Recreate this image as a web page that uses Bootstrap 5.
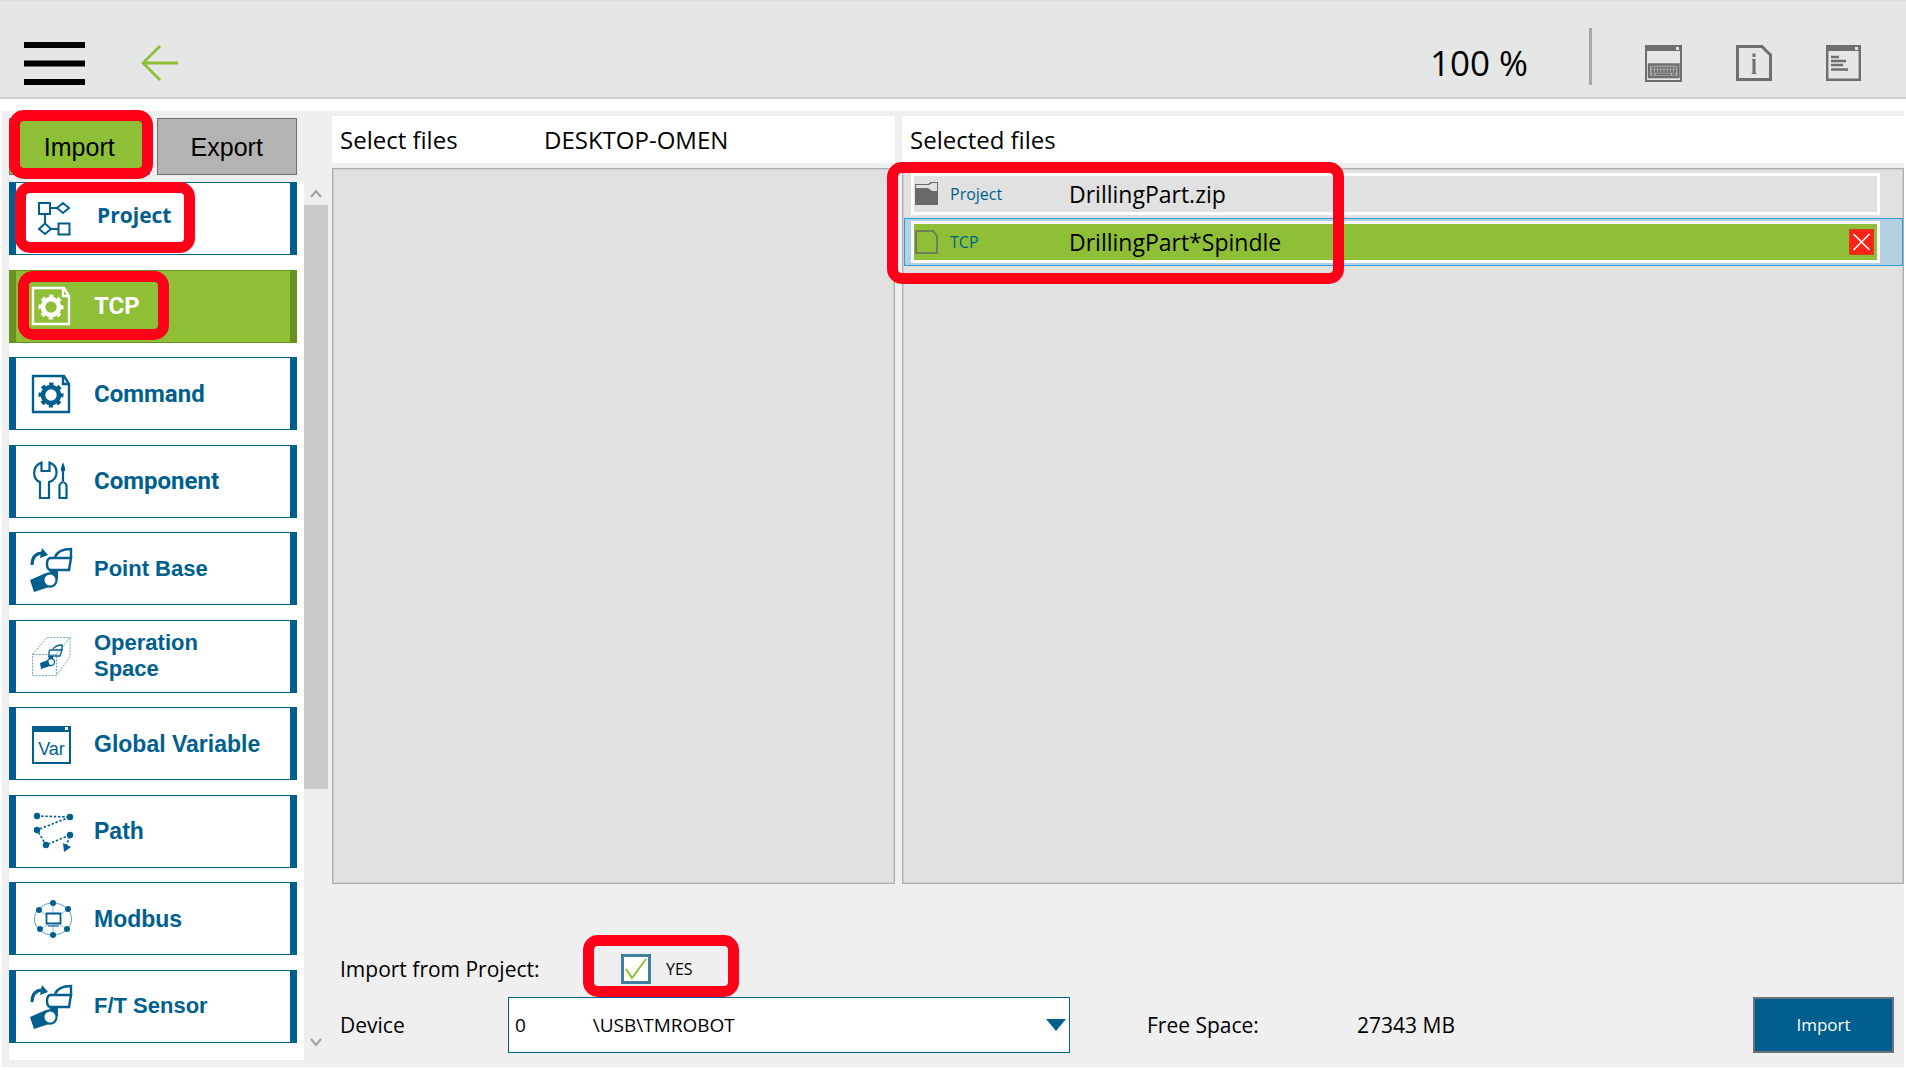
<!DOCTYPE html>
<html lang="en">
<head>
<meta charset="utf-8">
<meta name="viewport" content="width=device-width, initial-scale=1">
<title>Import / Export</title>
<link href="https://cdn.jsdelivr.net/npm/bootstrap@5.3.0/dist/css/bootstrap.min.css" rel="stylesheet">
<style>
:root{--tm-blue:#005f8e;--tm-green:#8ebf36;--tm-panel:#efefef;--tm-pane:#e1e1e1;--tm-red:#ff0018}
body{font-family:"Open Sans","Noto Sans",sans-serif;color:#000;background:#fff;font-size:21px;line-height:30px}
button,select{border-radius:0;padding:0}
svg{display:block;flex:none}
.topbar{height:99px;padding:0 45px 12px 24px;background:#e5e7e6;border-top:1px solid #dcdcdc;border-bottom:2px solid #cfcfcf}
.tool{height:44px;border:0;background:none;display:flex;align-items:center}
.tool-row{gap:54px}
.back{margin-left:56px}
.speed{font-size:35px;line-height:44px}
.rule{width:3px;height:57px;background:#a9a9a9;margin:0 53px 0 61px}
.workspace{margin:12px 2px 3px;background:var(--tm-panel)}
.sidebar{width:330px;flex:none;padding:7px 4px 7px 7px}
.tabs-row{gap:7px;width:288px;margin-bottom:7px}
.tab-btn{height:57px;border:1px solid #707070;background:#b3b3b3;font:25px/30px "Liberation Sans",sans-serif;color:#000}
.tab-btn.active{background:var(--tm-green)}
.kinds{background:#fff;width:295px;padding:0 7px 17px 0}
.kind{position:relative;width:288px;height:73px;border:solid var(--tm-blue);border-width:1px 7px;background:#fff;color:var(--tm-blue);font:bold 22px/26px "Liberation Sans",sans-serif;text-align:left;padding-left:13px;gap:17px}
.kind.active{background:var(--tm-green);border-color:#66921d;color:#fff}
.din{font-family:Roboto,sans-serif;font-size:24px}
.wide{font-size:23px}
.seg{font-family:"Open Sans",sans-serif;font-size:21px;padding:0 0 8px 3px}
.sbar{width:24px;margin-bottom:7px}
.sbar-btn{height:23px;border:0;background:none;width:24px;padding-left:4px}
.sbar-thumb{background:#cbcbcb;height:67%}
.split{gap:7px}
.col-left{flex:563 1 0;min-width:0}
.col-right{flex:1002 1 0;min-width:0}
.content{padding-top:5px;min-width:0}
.pane-head{height:47px;background:#fff;padding:0 8px;font-size:24px;line-height:48px;margin-bottom:5px}
.pane-head span{flex:0 0 204px}
.pane{background:var(--tm-pane);border:1px solid #abadb3;box-shadow:inset 1px 1px #cdced2,inset -1px -1px #cdced2;padding:1px 0 1px 1px}
.file{padding:2px 22px 2px 6px;border:1px solid transparent;height:48px}
.file.selected{background:#b3d1e0;border-color:#26a0da}
.file-in{border:3px solid #fff;height:42px;padding:0 3px 0 1px;font-size:23px}
.file.selected .file-in{background:var(--tm-green)}
.file-kind{font-size:16px;width:131px;padding-left:12px;color:var(--tm-blue)}
.del{width:25px;height:26px;border:1px solid #d23c1f;background:#ff2219}
.footer-bar{padding:0 10px 14px 8px}
.opt-row{height:57px;margin-top:56px}
.lab{width:168px;flex:none;white-space:nowrap}
.chk-area{position:relative;margin-left:113px;gap:15px}
.chk{position:relative;width:30px;height:30px}
.chk input{appearance:none;width:30px;height:30px;margin:0;border:3px solid #40809f;background:#fff;display:block}
.chk svg{position:absolute;left:3px;top:3px;pointer-events:none}
.yes{font-size:16px}
.dev{position:relative;width:562px}
.dev select{appearance:none;width:100%;height:56px;border:1px solid var(--tm-blue);background:#fff;padding:0 6px;font-size:19px;color:#000}
.dev::after{content:"";position:absolute;right:4px;top:22px;border:10px solid transparent;border-top:12px solid var(--tm-blue);border-bottom:0;pointer-events:none}
.space-label{width:210px;margin-left:77px}
.go{width:141px;height:56px;border:2px solid #6b7378;background:var(--tm-blue);color:#fff;font-size:17px}
/* highlight frames laid over the controls */
.frame{position:absolute;border:11px solid var(--tm-red);border-radius:15px;pointer-events:none;z-index:3}
.frame-tab{left:-1px;top:-9px;width:144px;height:69px}
.frame-project{left:-1px;top:-1px;width:180px;height:71px}
.frame-tcp{left:2px;top:0;width:151px;height:69px}
.frame-files{left:-16px;top:-7px;width:457px;height:122px}
.frame-yes{left:-38px;top:-19px;width:156px;height:62px}
</style>
</head>
<body class="d-flex flex-column min-vh-100">
<svg width="0" height="0" class="position-absolute" aria-hidden="true">
<symbol id="arm" viewBox="0 0 48 48">
 <path d="M3 20C3 11 8 8 14 8" fill="none" stroke="currentColor" stroke-width="3"/>
 <path d="M13 3l6 7-8 3z" fill="currentColor"/>
 <path d="M26 12C28 7 33 4 42 4v9" fill="none" stroke="currentColor" stroke-width="2.4"/>
 <path d="M21 13h21l-2 12H21q-3-1-3-6t3-6z" fill="#fff" stroke="currentColor" stroke-width="2.4"/>
 <path d="M20 25h9v9h-5z" fill="currentColor"/>
 <path d="M1 35l16-7 9 12-21 7z" fill="currentColor"/>
 <circle cx="21" cy="35" r="6.6" fill="#fff" stroke="currentColor" stroke-width="2.2"/>
</symbol>
<symbol id="gearfile" viewBox="0 0 48 48">
 <path d="M4 6h31l5 8v28H4zM34 6v8h6" fill="none" stroke="currentColor" stroke-width="2.4"/>
 <circle cx="22" cy="25" r="8" fill="none" stroke="currentColor" stroke-width="4.600"/>
 <circle cx="22" cy="25" r="10.8" fill="none" stroke="currentColor" stroke-width="3.4" stroke-dasharray="4.24 4.24" stroke-dashoffset="2.1"/>
</symbol>
</svg>

<header class="topbar d-flex align-items-end">
 <button class="tool" aria-label="Menu"><svg width="61" height="44"><path d="M0 4h61M0 22.5h61M0 41h61" stroke="#000" stroke-width="6"/></svg></button>
 <button class="tool back me-auto" aria-label="Back"><svg width="38" height="38" fill="none" stroke="#8ebf36" stroke-width="2.8"><path d="M37 19H2M19 2L2 19l17 17"/></svg></button>
 <span class="speed">100 %</span>
 <span class="rule"></span>
 <div class="tool-row d-flex">
 <button class="tool" aria-label="Keyboard"><svg width="37" height="37" fill="none" stroke="#6f6f6f"><path d="M1 1h35v35H1z" stroke-width="2"/><path d="M1 3.500h35" stroke-width="5"/><path d="M31 3.500h3" stroke="#e5e7e6" stroke-width="3"/><path d="M4 19.500h29.500v12.500H4z" stroke-width="2.400" fill="#bbb"/><path d="M6.500 23h25M6.500 26.500h25" stroke-width="3" stroke-dasharray="2.500 .7"/><path d="M6.500 29.300h3.500M11 29.300h15M27 29.300h4" stroke-width="1.800"/></svg></button>
 <button class="tool" aria-label="Information"><svg width="36" height="36" fill="none" stroke="#6f6f6f" stroke-width="3"><path d="M1.500 1.500H26L34.500 10v24.500H1.500z"/><path d="M18 14V29M18 8.500v3.500"/><path d="M16 14.500h2M15.500 28.500h5" stroke-width="1"/></svg></button>
 <button class="tool" aria-label="Log"><svg width="35" height="36" fill="none" stroke="#6f6f6f" stroke-width="2.400"><path d="M1.200 1.200h32.600v33.600H1.200z"/><path d="M1 3.500h33" stroke-width="5"/><path d="M29 3.500h3" stroke="#e5e7e6" stroke-width="3"/><path d="M5 12h8M5 16h15M5 20h12M5 24.500h17"/></svg></button>
 </div>
</header>

<main class="workspace d-flex flex-grow-1">
 <aside class="sidebar d-flex flex-column">
  <div class="tabs-row d-flex">
   <button class="tab-btn active flex-fill w-50 position-relative">Import<span class="frame frame-tab"></span></button>
   <button class="tab-btn flex-fill w-50">Export</button>
  </div>
  <div class="d-flex flex-grow-1">
   <nav class="kinds d-flex flex-column justify-content-between flex-grow-1" aria-label="Item kinds">
    <button class="kind d-flex align-items-center"><svg width="48" height="48" fill="none" stroke="currentColor" stroke-width="2"><path d="M10 8h11v11H10zM29.500 28.500h11v11h-11zM21 13h7M28 13l6-5 6 5-6 5zM16 19v9M16 28.500l-6 5.500 6 5 6-5zM22 34h7"/></svg><span class="seg">Project</span><span class="frame frame-project"></span></button>
    <button class="kind active d-flex align-items-center"><svg width="48" height="48"><use href="#gearfile"/></svg><span class="din">TCP</span><span class="frame frame-tcp"></span></button>
    <button class="kind d-flex align-items-center"><svg width="48" height="48"><use href="#gearfile"/></svg><span class="din">Command</span></button>
    <button class="kind d-flex align-items-center"><svg width="48" height="48" fill="none" stroke="currentColor" stroke-width="2.200"><path d="M12.500 5.500C3 9 3 22 11 25v16h9V25C30 22 30 9 20.500 5.500V14h-8zM34 24V10M30.500 41V28q3.500-6 7 0v13z"/><path d="M34 5l2 6v3h-4v-3z" fill="currentColor" stroke="none"/></svg><span class="din">Component</span></button>
    <button class="kind d-flex align-items-center"><svg width="48" height="48"><use href="#arm"/></svg><span>Point Base</span></button>
    <button class="kind d-flex align-items-center"><svg width="48" height="48"><path d="M3.500 22.500h24v21h-24zM3.500 22.500L18 5.500h23M41 5.500v19l-13.500 19M27.500 22.500L41 5.500" fill="none" stroke="currentColor" stroke-dasharray="2 1.200" stroke-width=".8" opacity=".7"/><g fill="none" stroke="currentColor" stroke-width="1.300"><path d="M24 17q3-4 9-4v5"/><path d="M21 18h12l-2 6H20v-4z"/><circle cx="22" cy="30" r="3.500"/></g><path d="M19 24h5v3h-4zM11 31l8-3 2 6-9 3z" fill="currentColor"/></svg><span>Operation<br>Space</span></button>
    <button class="kind d-flex align-items-center"><svg width="48" height="48"><path d="M4 7h37v36H4z" fill="none" stroke="currentColor" stroke-width="2"/><path d="M3 6h39v6H3z" fill="currentColor"/><path d="M36 7h3v3h-3z" fill="#fff"/><text x="22.500" y="35" text-anchor="middle" font-size="18" font-weight="400" fill="currentColor">Var</text></svg><span class="wide">Global Variable</span></button>
    <button class="kind d-flex align-items-center"><svg width="48" height="48"><path d="M8 9l33 1L8 23l9 15 24-10-4 12" fill="none" stroke="currentColor" stroke-width="1.600" stroke-dasharray="2.400 1.800"/><g fill="currentColor"><circle cx="8" cy="9" r="3.200"/><circle cx="41" cy="10" r="3.200"/><circle cx="8" cy="23" r="3.200"/><circle cx="17" cy="38" r="3.200"/><circle cx="41" cy="28" r="3.200"/><path d="M34 36l8 4-7 5z"/></g></svg><span class="wide">Path</span></button>
    <button class="kind d-flex align-items-center"><svg width="48" height="48"><g fill="none" stroke="currentColor"><ellipse cx="24" cy="24" rx="18.500" ry="16" opacity=".6"/><path d="M24 8v10M10 15l7 5M39 14l-7 5M11 34l8-4M38 34l-7-4M24 30v10" opacity=".4"/><path d="M17.500 18.500h14v10h-14z" fill="#fff" stroke-width="1.800"/><path d="M19 31h11" stroke-width="1.200"/></g><g fill="currentColor"><circle cx="24" cy="8" r="3"/><circle cx="10" cy="15" r="3"/><circle cx="39" cy="14" r="3"/><circle cx="11" cy="34" r="3"/><circle cx="38" cy="34" r="3"/><circle cx="24" cy="40" r="3"/></g></svg><span class="wide">Modbus</span></button>
    <button class="kind d-flex align-items-center"><svg width="48" height="48"><use href="#arm"/></svg><span>F/T Sensor</span></button>
   </nav>
   <div class="sbar d-flex flex-column">
    <button class="sbar-btn" aria-label="Scroll up"><svg width="16" height="12" fill="none" stroke="#a0a0a0" stroke-width="2"><path d="M3 9l5-6 5 6"/></svg></button>
    <div class="sbar-thumb"></div>
    <button class="sbar-btn mt-auto" aria-label="Scroll down"><svg width="16" height="12" fill="none" stroke="#a0a0a0" stroke-width="2"><path d="M3 3l5 6 5-6"/></svg></button>
   </div>
  </div>
 </aside>

 <div class="content d-flex flex-column flex-grow-1">
  <div class="split d-flex flex-grow-1">
   <section class="col-left d-flex flex-column">
    <div class="pane-head d-flex"><span>Select files</span>DESKTOP-OMEN</div>
    <div class="pane flex-grow-1"></div>
   </section>
   <section class="col-right d-flex flex-column">
    <div class="pane-head">Selected files</div>
    <div class="pane flex-grow-1 position-relative">
     <div class="file"><div class="file-in d-flex align-items-center">
      <svg width="23" height="24"><path d="M0 2h13l3-2h7v23H0z" fill="#696969"/><path d="M1 3h13l3-2h5v8h-5l-4-3H1z" fill="#e1e1e1"/></svg>
      <span class="file-kind">Project</span><span>DrillingPart.zip</span></div></div>
     <div class="file selected"><div class="file-in d-flex align-items-center">
      <svg width="23" height="24"><path d="M1 1h17l4 5v17H1z" fill="none" stroke="#717d58" stroke-width="2"/></svg>
      <span class="file-kind">TCP</span><span>DrillingPart*Spindle</span>
      <button class="del ms-auto" aria-label="Remove"><svg width="23" height="24" stroke="#fff" stroke-width="1.600"><path d="M3.500 4l16 16M19.500 4l-16 16"/></svg></button></div></div>
     <span class="frame frame-files"></span>
    </div>
   </section>
  </div>
  <div class="footer-bar">
   <div class="opt-row d-flex align-items-center">
    <label class="lab" for="fromProject">Import from Project:</label>
    <div class="chk-area d-flex align-items-center">
     <span class="chk"><input type="checkbox" id="fromProject" checked><svg width="24" height="24" fill="none" stroke="#8ebf36" stroke-width="2"><path d="M2 12l6 9L22 2"/></svg></span>
     <label class="yes" for="fromProject">YES</label>
     <span class="frame frame-yes"></span>
    </div>
   </div>
   <div class="d-flex align-items-center">
    <label class="lab" for="device">Device</label>
    <div class="dev"><select id="device"><option>0&emsp;&emsp;&emsp;&nbsp;&nbsp;\USB\TMROBOT</option></select></div>
    <span class="space-label">Free Space:</span>
    <span>27343 MB</span>
    <button class="go ms-auto">Import</button>
   </div>
  </div>
 </div>
</main>
<script src="https://cdn.jsdelivr.net/npm/bootstrap@5.3.0/dist/js/bootstrap.bundle.min.js"></script>
</body>
</html>
